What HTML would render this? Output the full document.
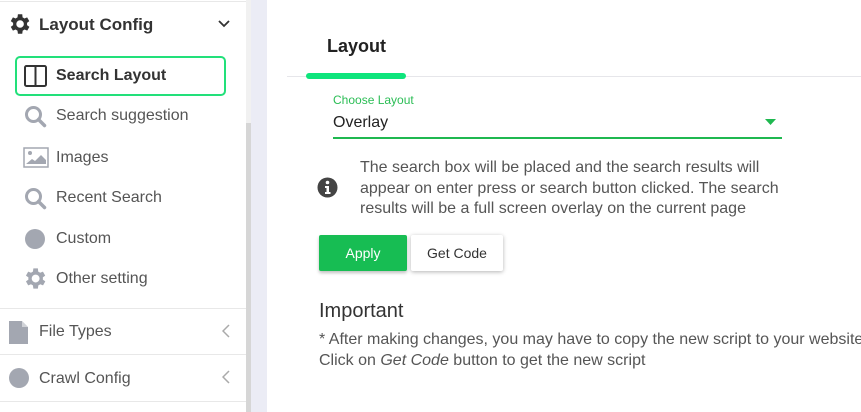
<!DOCTYPE html>
<html><head><style>
*{margin:0;padding:0;box-sizing:border-box}
body{width:861px;height:412px;overflow:hidden;background:#fff;font-family:"Liberation Sans",sans-serif;position:relative;color:#333}
.a{position:absolute}
.side{left:0;top:0;width:246px;height:412px;background:#fff}
.sb{left:246px;top:0;width:5px;height:412px;background:#f1f1f1}
.thumb{left:246px;top:123px;width:5px;height:289px;background:#d6d6d6}
.gap{left:251px;top:0;width:16px;height:412px;background:#ebecf5}
.it{font-size:16px;color:#555}
.hr{height:1px;background:#e8e8e8;left:0;width:246px}
</style></head><body>
<div class="a side"></div>
<div class="a sb"></div><div class="a thumb"></div><div class="a gap"></div>
<div class="a hr" style="top:1px"></div>
<svg class="a" style="left:6px;top:11px" width="26" height="26" viewBox="0 0 24 24"><path fill="#333" d="M19.4 13a7.5 7.5 0 000-2l2.1-1.6-2-3.5-2.5 1a7.4 7.4 0 00-1.7-1L15 3h-4l-.4 2.9a7.4 7.4 0 00-1.7 1l-2.5-1-2 3.5L6.6 11a7.5 7.5 0 000 2l-2.2 1.6 2 3.5 2.5-1a7.4 7.4 0 001.7 1L11 21h4l.4-2.9a7.4 7.4 0 001.7-1l2.5 1 2-3.5zM13 15.5a3.5 3.5 0 110-7 3.5 3.5 0 010 7z"/></svg>
<div class="a" style="left:39px;top:15px;font-size:17px;font-weight:bold;color:#333">Layout Config</div>
<svg class="a" style="left:218px;top:19px" width="12" height="10" viewBox="0 0 12 10"><path d="M1 2l5 5 5-5" stroke="#333" stroke-width="1.8" fill="none"/></svg>
<div class="a" style="left:15px;top:56px;width:211px;height:40px;border:2px solid #22e07a;border-radius:5px"></div>
<svg class="a" style="left:24px;top:65px" width="23" height="22" viewBox="0 0 23 22"><rect x="1" y="1" width="21" height="20" rx="1.5" fill="none" stroke="#333" stroke-width="2"/><path d="M11.5 1v20" stroke="#333" stroke-width="2"/></svg>
<div class="a" style="left:56px;top:67px;font-size:16px;font-weight:bold;color:#333">Search Layout</div>
<svg class="a" style="left:24px;top:105px" width="23" height="23" viewBox="0 0 23 23"><circle cx="9.5" cy="9.5" r="7" fill="none" stroke="#a3a7b1" stroke-width="3"/><path d="M14.5 14.5l6 6" stroke="#a3a7b1" stroke-width="3.5" stroke-linecap="round"/></svg>
<div class="a it" style="left:56px;top:107px">Search suggestion</div>
<svg class="a" style="left:23px;top:147px" width="26" height="21" viewBox="0 0 26 21"><rect x="1" y="1" width="24" height="19" fill="none" stroke="#a3a7b1" stroke-width="1.5"/><circle cx="7" cy="6" r="2" fill="#a3a7b1"/><path d="M3 17l6-5 3 2 6-6 5 5v4H3z" fill="#a3a7b1"/></svg>
<div class="a it" style="left:56px;top:149px">Images</div>
<svg class="a" style="left:24px;top:187px" width="23" height="23" viewBox="0 0 23 23"><circle cx="9.5" cy="9.5" r="7" fill="none" stroke="#a3a7b1" stroke-width="3"/><path d="M14.5 14.5l6 6" stroke="#a3a7b1" stroke-width="3.5" stroke-linecap="round"/></svg>
<div class="a it" style="left:56px;top:189px">Recent Search</div>
<div class="a" style="left:25px;top:229px;width:20px;height:20px;border-radius:50%;background:#a3a7b1"></div>
<div class="a it" style="left:56px;top:230px">Custom</div>
<svg class="a" style="left:21px;top:265px" width="27" height="27" viewBox="0 0 24 24"><path fill="#a3a7b1" d="M19.4 13a7.5 7.5 0 000-2l2.1-1.6-2-3.5-2.5 1a7.4 7.4 0 00-1.7-1L15 3h-4l-.4 2.9a7.4 7.4 0 00-1.7 1l-2.5-1-2 3.5L6.6 11a7.5 7.5 0 000 2l-2.2 1.6 2 3.5 2.5-1a7.4 7.4 0 001.7 1L11 21h4l.4-2.9a7.4 7.4 0 001.7-1l2.5 1 2-3.5zM13 15.5a3.5 3.5 0 110-7 3.5 3.5 0 010 7z"/></svg>
<div class="a it" style="left:56px;top:270px">Other setting</div>
<div class="a hr" style="top:308px"></div>
<svg class="a" style="left:8px;top:320px" width="22" height="25" viewBox="0 0 22 25"><path d="M1 1h13l6 6v17H1z" fill="#a3a7b1"/><path d="M14 1v6h6" fill="#fff" opacity=".5"/></svg>
<div class="a it" style="left:39px;top:323px">File Types</div>
<svg class="a" style="left:222px;top:324px" width="8" height="14" viewBox="0 0 8 14"><path d="M7 1L1 7l6 6" stroke="#aaa" stroke-width="1.5" fill="none"/></svg>
<div class="a hr" style="top:354px"></div>
<div class="a" style="left:9px;top:368px;width:20px;height:20px;border-radius:50%;background:#a3a7b1"></div>
<div class="a it" style="left:39px;top:370px">Crawl Config</div>
<svg class="a" style="left:222px;top:370px" width="8" height="14" viewBox="0 0 8 14"><path d="M7 1L1 7l6 6" stroke="#aaa" stroke-width="1.5" fill="none"/></svg>
<div class="a hr" style="top:401px"></div>
<div class="a" style="left:327px;top:36px;font-size:18px;font-weight:bold;color:#222">Layout</div>
<div class="a" style="left:287px;top:76px;width:574px;height:1px;background:#e6e6ea"></div>
<div class="a" style="left:306px;top:73px;width:100px;height:6px;border-radius:3px;background:#0ee57c"></div>
<div class="a" style="left:333px;top:93px;font-size:12px;color:#2bbd55">Choose Layout</div>
<div class="a" style="left:333px;top:114px;font-size:16px;color:#222">Overlay</div>
<svg class="a" style="left:765px;top:119px" width="11" height="7" viewBox="0 0 11 7"><path d="M0 0h11L5.5 6z" fill="#1fb850"/></svg>
<div class="a" style="left:333px;top:137px;width:449px;height:2px;background:#1fb850"></div>
<svg class="a" style="left:317px;top:177px" width="21" height="21" viewBox="0 0 21 21"><circle cx="10.5" cy="10.5" r="10" fill="#444"/><circle cx="10.5" cy="5.5" r="1.8" fill="#fff"/><path d="M8 9h4v6h1.5v2h-5.5v-2h1.5v-4H8z" fill="#fff"/></svg>
<div class="a" style="left:360px;top:158px;width:440px;font-size:16px;line-height:20.5px;color:#555">The search box will be placed and the search results will appear on enter press or search button clicked. The search results will be a full screen overlay on the current page</div>
<div class="a" style="left:319px;top:235px;width:88px;height:36px;background:#17bd53;color:#fff;font-size:14px;text-align:center;line-height:36px;border-radius:2px;box-shadow:0 2px 3px rgba(0,0,0,.25)">Apply</div>
<div class="a" style="left:411px;top:235px;width:92px;height:36px;background:#fff;color:#333;font-size:14px;text-align:center;line-height:36px;border-radius:2px;box-shadow:0 1px 4px rgba(0,0,0,.3)">Get Code</div>
<div class="a" style="left:319px;top:300px;font-size:20px;color:#333">Important</div>
<div class="a" style="left:319px;top:330px;font-size:16px;line-height:20.5px;color:#555;white-space:nowrap">* After making changes, you may have to copy the new script to your website<br>Click on <i>Get Code</i> button to get the new script</div>
</body></html>
